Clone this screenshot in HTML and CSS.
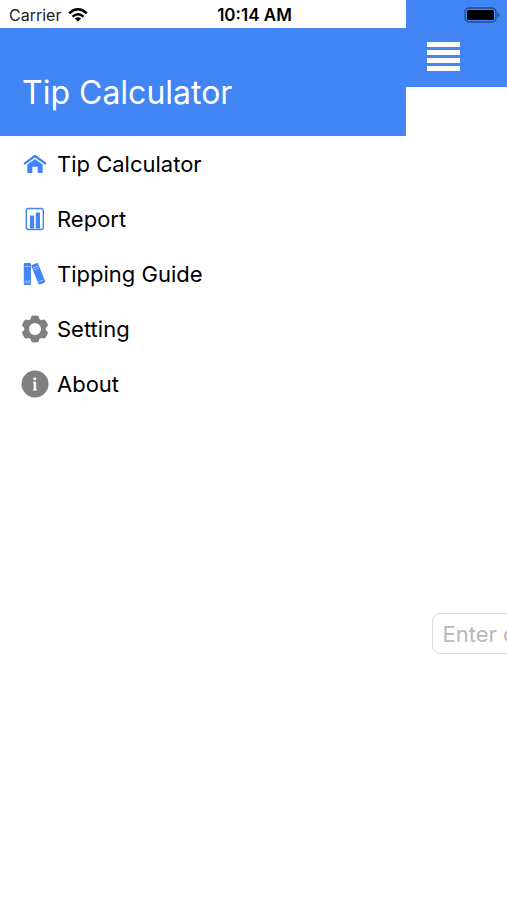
FILE: index.html
```html
<!DOCTYPE html>
<html lang="en">
<head>
<meta charset="utf-8">
<meta name="viewport" content="width=device-width, initial-scale=1">
<title>Tip Calculator</title>
<link rel="stylesheet" href="styles.css">
</head>
<body>
<div class="app">
  <div class="status">
    <span class="carrier">Carrier
      <svg width="20" height="14" viewBox="0 0 20 14" aria-hidden="true"><g fill="none" stroke="#000" stroke-width="2.5"><path d="M1.2 5.2Q10-2.6 18.8 5.2"/><path d="M4.5 8.7Q10 3.9 15.5 8.7"/></g><path d="M6.9 10.6Q10 8 13.1 10.6L10 13.8z"/></svg>
    </span>
    <time class="clock">10:14 AM</time>
    <svg class="battery" width="36" height="16" viewBox="0 0 36 16" aria-hidden="true"><rect x="1" y="1" width="31" height="14" rx="4" fill="none" stroke="#244a8c" stroke-width="1.3"/><rect x="3" y="3" width="27" height="10" rx="1.5"/><path d="M33.5 5.5q2 .8 2 2.500t-2 2.500z" fill="#244a8c"/></svg>
  </div>
  <aside class="drawer">
    <header class="drawer-head"><h1>Tip Calculator</h1></header>
    <nav class="menu">
      <a href="#calculator">
        <svg width="28" height="28" viewBox="0 0 28 28" fill="#4285f4" aria-hidden="true"><path d="M3.800 13.400 14 6l10.200 7.400" fill="none" stroke="#4285f4" stroke-width="2.400" stroke-linecap="round" stroke-linejoin="round"/><path d="M6.300 14.500 14 9l7.700 5.500V23h-5v-6.300h-5.400V23h-5z"/></svg>
        <span>Tip Calculator</span></a>
      <a href="#report">
        <svg width="28" height="28" viewBox="0 0 28 28" fill="#4285f4" aria-hidden="true"><rect x="5.300" y="3.500" width="17" height="21" rx="2" fill="none" stroke="#4285f4" stroke-width="1.400"/><path d="M9 10.500h4.200v13H9zM14.800 7.500H19v16h-4.200z"/></svg>
        <span>Report</span></a>
      <a href="#guide">
        <svg width="28" height="28" viewBox="0 0 28 28" fill="#4285f4" aria-hidden="true"><rect x="2.800" y="3" width="7.200" height="22" rx="1"/><path d="M3.500 6.500H9.500M3.500 21H9.500M3.500 22.600H9.500" stroke="#a6c5fb" stroke-width=".8"/><g transform="rotate(-22 17.300 13.800)"><rect x="13.700" y="3.300" width="7.200" height="21" rx="1"/><path d="M14.300 6.500h6M14.300 8.500h6M14.300 21.500h6" stroke="#a6c5fb" stroke-width=".8"/></g></svg>
        <span>Tipping Guide</span></a>
      <a href="#setting">
        <svg width="28" height="28" viewBox="0 0 28 28" aria-hidden="true"><g fill="#808080"><circle cx="14" cy="14" r="10.800"/><rect x="9.800" y=".5" width="8.400" height="27" rx="3"/><rect x="9.800" y=".5" width="8.400" height="27" rx="3" transform="rotate(60 14 14)"/><rect x="9.800" y=".5" width="8.400" height="27" rx="3" transform="rotate(120 14 14)"/></g><circle cx="14" cy="14" r="6" fill="#fff"/></svg>
        <span>Setting</span></a>
      <a href="#about">
        <svg width="28" height="28" viewBox="0 0 28 28" aria-hidden="true"><circle cx="14" cy="14" r="13.500" fill="#808080"/><g fill="#f4f4f4"><circle cx="13.800" cy="8.800" r="1.500"/><path d="M12 11.800h3.200v7.400h.8v1.300h-4.200v-1.300h.8v-6H12z"/></g></svg>
        <span>About</span></a>
    </nav>
  </aside>
  <main class="page">
    <header class="page-head">
      <button type="button" class="toggle" aria-label="Menu"><i></i><i></i><i></i><i></i></button>
    </header>
    <div class="page-body">
      <input class="amount" type="text" placeholder="Enter c" aria-label="Enter amount">
    </div>
  </main>
</div>
</body>
</html>
```
FILE: styles.css
```css
* { box-sizing: border-box; }
body {
  margin: 0;
  background: #fff;
  color: #000;
  font-family: Inter, "Liberation Sans", sans-serif;
}
.app {
  position: relative;
  display: flex;
  min-height: 100vh;
  overflow: hidden;
}
.status {
  position: absolute;
  top: 0;
  left: 0;
  right: 0;
  display: grid;
  grid-template-columns: 1fr auto 1fr;
  align-items: center;
  height: 30px;
  padding: 0 7px 0 9px;
  font-size: 16px;
  z-index: 2;
}
.carrier {
  display: flex;
  align-items: center;
  gap: 7px;
  color: #222;
}
.clock {
  font-size: 17px;
  font-weight: 600;
}
.battery { justify-self: end; }
.drawer {
  flex: 0 0 80%;
  padding-top: 28px;
}
.drawer-head {
  display: flex;
  align-items: flex-end;
  height: 108px;
  padding: 0 22px 23px;
  background: #4285f4;
}
h1 {
  margin: 0;
  color: #fff;
  font-size: 32px;
  font-weight: 400;
  line-height: 40px;
}
.menu a {
  display: flex;
  align-items: center;
  gap: 8px;
  height: 55px;
  padding-left: 21px;
  color: #000;
  font-size: 22px;
  text-decoration: none;
}
.page {
  flex: 1;
  min-width: 0;
  overflow: hidden;
}
.page-head {
  display: flex;
  align-items: flex-end;
  height: 87px;
  padding: 0 21px 16px;
  background: #4285f4;
}
.toggle {
  display: flex;
  flex-direction: column;
  gap: 3px;
  width: 33px;
  padding: 0;
  border: 0;
  background: none;
}
.toggle i {
  width: 100%;
  height: 5px;
  background: #fff;
}
.page-body { padding: 526px 0 0 26px; }
.amount {
  width: 320px;
  height: 41px;
  padding: 0 10px;
  border: 1px solid #dcdcdc;
  border-radius: 8px;
  background: #fff;
  font-family: inherit;
  font-size: 22px;
}
.amount::placeholder { color: #b8b8b8; }
```
